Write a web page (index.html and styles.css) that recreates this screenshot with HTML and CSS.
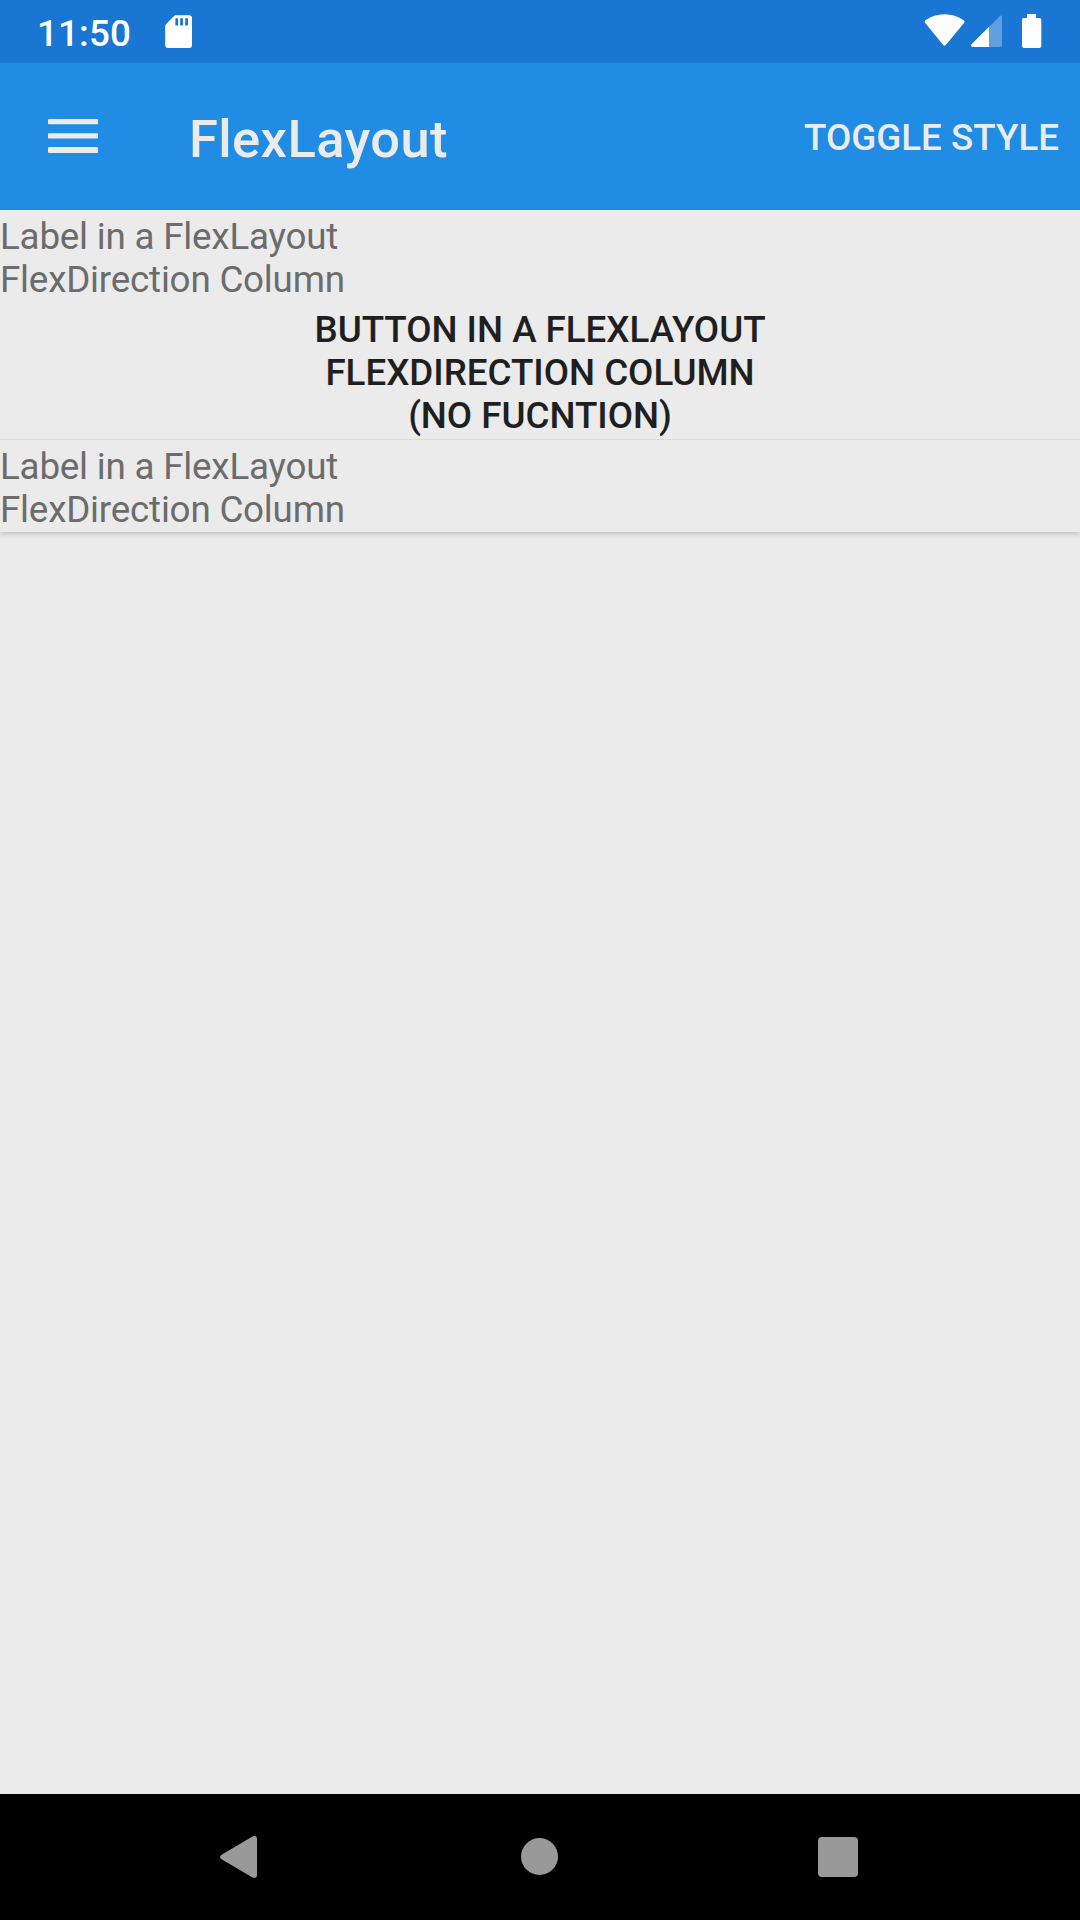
FILE: index.html
```html
<!DOCTYPE html>
<html lang="en">
<head>
<meta charset="utf-8">
<title>FlexLayout</title>
<link rel="stylesheet" href="styles.css">
</head>
<body>
<div class="screen">
  <div class="status-bar">
    <span class="clock">11:50</span>
    <svg class="sd-card" width="28" height="34" viewBox="0 0 28 34"><path fill="#fff" fill-rule="evenodd" d="M10.5 0.3H24.2Q27 .3 27 3V30Q27 33 24.2 33H3Q.2 33 .2 30V11Q.2 10 1 9.2L9 1Q9.7.3 10.5.3ZM10.4 3.3V10.4H13V3.3ZM15.2 3.3V10.4H18V3.3ZM20.2 3.3V10.4H23V3.3Z"/></svg>
    <div class="indicators">
      <svg width="42" height="34" viewBox="0 0 42 34"><path fill="#fff" d="M1.5 6.3C12-1.8 29-1.8 39.7 6.3Q41.2 7.5 40.2 8.8L22 30.8Q20.5 32.5 19 30.8L1 8.8Q0 7.4 1.5 6.3Z"/></svg>
      <svg width="32" height="34" viewBox="0 0 32 34"><path fill="#5e9fe0" d="M18 13L29 2Q31 .8 31 3V31Q31 33 29 33H18Z"/><path fill="#fff" d="M18 12.8V33H1.5Q-.7 33 .5 30.2Z"/></svg>
      <svg class="battery" width="20" height="35" viewBox="0 0 20 35"><path fill="#fff" d="M5 0H14V4H17.5Q19.3 4 19.3 6V32Q19.3 34 17.3 34H2Q0 34 0 32V6Q0 4 1.8 4H5Z"/></svg>
    </div>
  </div>
  <header class="app-bar">
    <svg class="menu-icon" width="50" height="34" viewBox="0 0 50 34" fill="#ebebeb"><rect y="0" width="50" height="5.3" rx=".7"/><rect y="14.2" width="50" height="5.3" rx=".7"/><rect y="28" width="50" height="6" rx="1"/></svg>
    <h1 class="title">FlexLayout</h1>
    <span class="action">TOGGLE STYLE</span>
  </header>
  <main class="content">
    <section class="card first">
      <p class="label">Label in a FlexLayout<br>FlexDirection Column</p>
      <button class="flat-button">BUTTON IN A FLEXLAYOUT<br>FLEXDIRECTION COLUMN<br>(NO FUCNTION)</button>
    </section>
    <section class="card last">
      <p class="label">Label in a FlexLayout<br>FlexDirection Column</p>
    </section>
  </main>
  <nav class="nav-bar">
    <svg width="38" height="42" viewBox="0 0 38 42"><path fill="#999" d="M32.5.4Q37 -1 37 3V39Q37 43 32.5 41.4L1.2 23Q-1 21 1.2 19Z"/></svg>
    <svg class="home" width="38" height="38" viewBox="0 0 38 38"><circle cx="18.5" cy="18.5" r="18.5" fill="#999"/></svg>
    <svg width="40" height="40" viewBox="0 0 40 40"><rect width="40" height="40" rx="4" fill="#999"/></svg>
  </nav>
</div>
</body>
</html>
```
FILE: styles.css
```css
* {
  box-sizing: border-box;
}

body {
  margin: 0;
  font-family: Roboto, sans-serif;
  font-size: 36.75px;
  line-height: 43px;
  background: #ebebeb;
}

svg {
  display: block;
  flex: none;
}

.screen {
  display: flex;
  flex-direction: column;
  width: 1080px;
  height: 1920px;
  overflow: hidden;
}

.status-bar {
  display: flex;
  align-items: flex-start;
  height: 63px;
  padding: 12px 38px 0 37px;
  background: #1976d2;
  color: #fff;
}

.clock {
  width: 127.5px;
  font-weight: 500;
  letter-spacing: .15px;
}

.sd-card {
  margin-top: 3px;
}

.indicators {
  display: flex;
  gap: 5px;
  margin-left: auto;
  padding-top: 2px;
}

.battery {
  margin-left: 14px;
}

.app-bar {
  display: flex;
  align-items: flex-start;
  height: 147px;
  padding: 0 21px 0 48px;
  background: #208ce3;
  color: #ebebeb;
}

.menu-icon {
  margin: 56px 91px 0 0;
}

.title {
  margin: 45px 0 0;
  font-size: 52.5px;
  line-height: 62px;
  font-weight: 500;
  letter-spacing: .4px;
}

.action {
  margin: 53px 0 0 auto;
  font-weight: 500;
}

.content {
  flex: 1;
}

.card {
  display: flex;
  flex-direction: column;
  background: #ebebeb;
}

.first {
  height: 229px;
  padding-top: 5px;
}

.last {
  height: 93px;
  padding-top: 5px;
  border-top: 1px solid #d9d9d9;
  box-shadow: 0 2px 5px rgba(0, 0, 0, .18);
  clip-path: inset(0 0 -10px);
}

.label {
  margin: 0;
  color: #6c6c6c;
  letter-spacing: -.2px;
}

.flat-button {
  margin: 7px 0 0;
  padding: 0;
  border: 0;
  background: none;
  color: #1f1f1f;
  font: inherit;
  font-weight: 500;
  letter-spacing: -.03px;
}

.nav-bar {
  display: flex;
  align-items: center;
  justify-content: space-between;
  height: 126px;
  padding: 0 222px 0 220px;
  background: #000;
}

.home {
  margin-left: 4px;
}
```
